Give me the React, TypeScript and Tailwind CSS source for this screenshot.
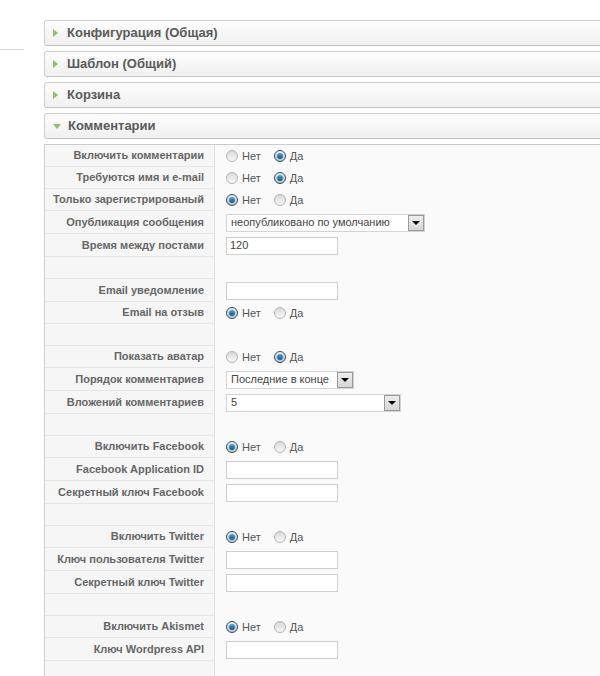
import React from "react";

type Row =
  | { kind: "radio"; label: string; value: "no" | "yes" }
  | { kind: "input"; label: string; value?: string }
  | { kind: "select"; label: string; value: string; width: string }
  | { kind: "blank" };

const rows: Row[] = [
  { kind: "radio", label: "Включить комментарии", value: "yes" },
  { kind: "radio", label: "Требуются имя и e-mail", value: "yes" },
  { kind: "radio", label: "Только зарегистрированый", value: "no" },
  { kind: "select", label: "Опубликация сообщения", value: "неопубликовано по умолчанию", width: "w-[199px]" },
  { kind: "input", label: "Время между постами", value: "120" },
  { kind: "blank" },
  { kind: "input", label: "Email уведомление" },
  { kind: "radio", label: "Email на отзыв", value: "no" },
  { kind: "blank" },
  { kind: "radio", label: "Показать аватар", value: "yes" },
  { kind: "select", label: "Порядок комментариев", value: "Последние в конце", width: "w-[128px]" },
  { kind: "select", label: "Вложений комментариев", value: "5", width: "w-[175px]" },
  { kind: "blank" },
  { kind: "radio", label: "Включить Facebook", value: "no" },
  { kind: "input", label: "Facebook Application ID" },
  { kind: "input", label: "Секретный ключ Facebook" },
  { kind: "blank" },
  { kind: "radio", label: "Включить Twitter", value: "no" },
  { kind: "input", label: "Ключ пользователя Twitter" },
  { kind: "input", label: "Секретный ключ Twitter" },
  { kind: "blank" },
  { kind: "radio", label: "Включить Akismet", value: "no" },
  { kind: "input", label: "Ключ Wordpress API" },
  { kind: "blank" },
];

const Radio: React.FC<{ checked: boolean; text: string }> = ({ checked, text }) => (
  <span className="flex items-center gap-[4px]">
    {checked ? (
      <span className="flex h-[12px] w-[12px] items-center justify-center rounded-full border border-[#3d4a55] bg-gradient-to-b from-[#e8eef2] to-[#b9c6cf]">
        <span className="h-[6px] w-[6px] rounded-full bg-gradient-to-b from-[#4aa3d6] to-[#135a8a]" />
      </span>
    ) : (
      <span className="h-[12px] w-[12px] rounded-full border border-[#b4b4b4] bg-gradient-to-b from-[#d8d8d8] to-[#f8f8f8]" />
    )}
    <span className="text-[11px] text-[#555]">{text}</span>
  </span>
);

const Header: React.FC<{ title: string; open?: boolean }> = ({ title, open }) => (
  <div className="mb-[5px] flex h-[26px] items-center rounded-l-[3px] border border-[#cfcfcf] border-b-[#c4c4c4] bg-gradient-to-b from-[#fdfdfd] to-[#f0f0f0] pl-[8px]">
    {open ? (
      <span className="mr-[7px] h-0 w-0 border-x-[4px] border-t-[5px] border-x-transparent border-t-[#8fc065]" />
    ) : (
      <span className="mr-[9px] h-0 w-0 border-y-[4px] border-l-[5px] border-y-transparent border-l-[#8fc065]" />
    )}
    <span className="text-[13px] font-bold text-[#5a5a5a]">{title}</span>
  </div>
);

const SelectBox: React.FC<{ value: string; width: string }> = ({ value, width }) => (
  <div className={`flex h-[18px] items-center justify-between border border-[#d4d4d4] bg-white pl-[4px] ${width}`}>
    <span className="text-[11px] text-[#444]">{value}</span>
    <span className="flex h-[16px] w-[16px] items-center justify-center border border-[#9a9a9a] bg-gradient-to-b from-[#eeeeee] to-[#d6d6d6]">
      <span className="h-0 w-0 border-x-[4px] border-t-[4px] border-x-transparent border-t-black" />
    </span>
  </div>
);

export default function App() {
  return (
    <div className="relative h-[676px] w-[600px] overflow-hidden bg-white font-['Liberation_Sans',Arial,sans-serif]">
      <div className="absolute left-0 top-[49px] h-px w-[24px] bg-[#dddddd]" />
      <div className="ml-[44px] w-[600px] pt-[20px]">
        <Header title="Конфигурация (Общая)" />
        <Header title="Шаблон (Общий)" />
        <Header title="Корзина" />
        <Header title="Комментарии" open />
        <div className="border-l border-t border-[#cccccc] bg-[#fafafa]">
          {rows.map((row, i) => {
            const h = row.kind === "input" || row.kind === "select" ? "h-[23px]" : "h-[22px]";
            return (
              <div key={i} className={`flex ${h}`}>
                <div className="flex w-[170px] shrink-0 items-center justify-end border-b border-r border-b-[#e6e6e6] border-r-[#e2e2e2] bg-[#f6f6f6] pr-[10px] text-[11px] font-bold text-[#666]">
                  {row.kind !== "blank" && row.label}
                </div>
                <div className="flex flex-1 items-center pl-[11px]">
                  {row.kind === "radio" && (
                    <div className="flex items-center gap-[13px]">
                      <Radio checked={row.value === "no"} text="Нет" />
                      <Radio checked={row.value === "yes"} text="Да" />
                    </div>
                  )}
                  {row.kind === "input" && (
                    <div className="flex h-[18px] w-[112px] items-center border border-[#cfcfcf] bg-white pl-[3px] text-[11px] text-[#444]">
                      {row.value}
                    </div>
                  )}
                  {row.kind === "select" && <SelectBox value={row.value} width={row.width} />}
                </div>
              </div>
            );
          })}
        </div>
      </div>
    </div>
  );
}
